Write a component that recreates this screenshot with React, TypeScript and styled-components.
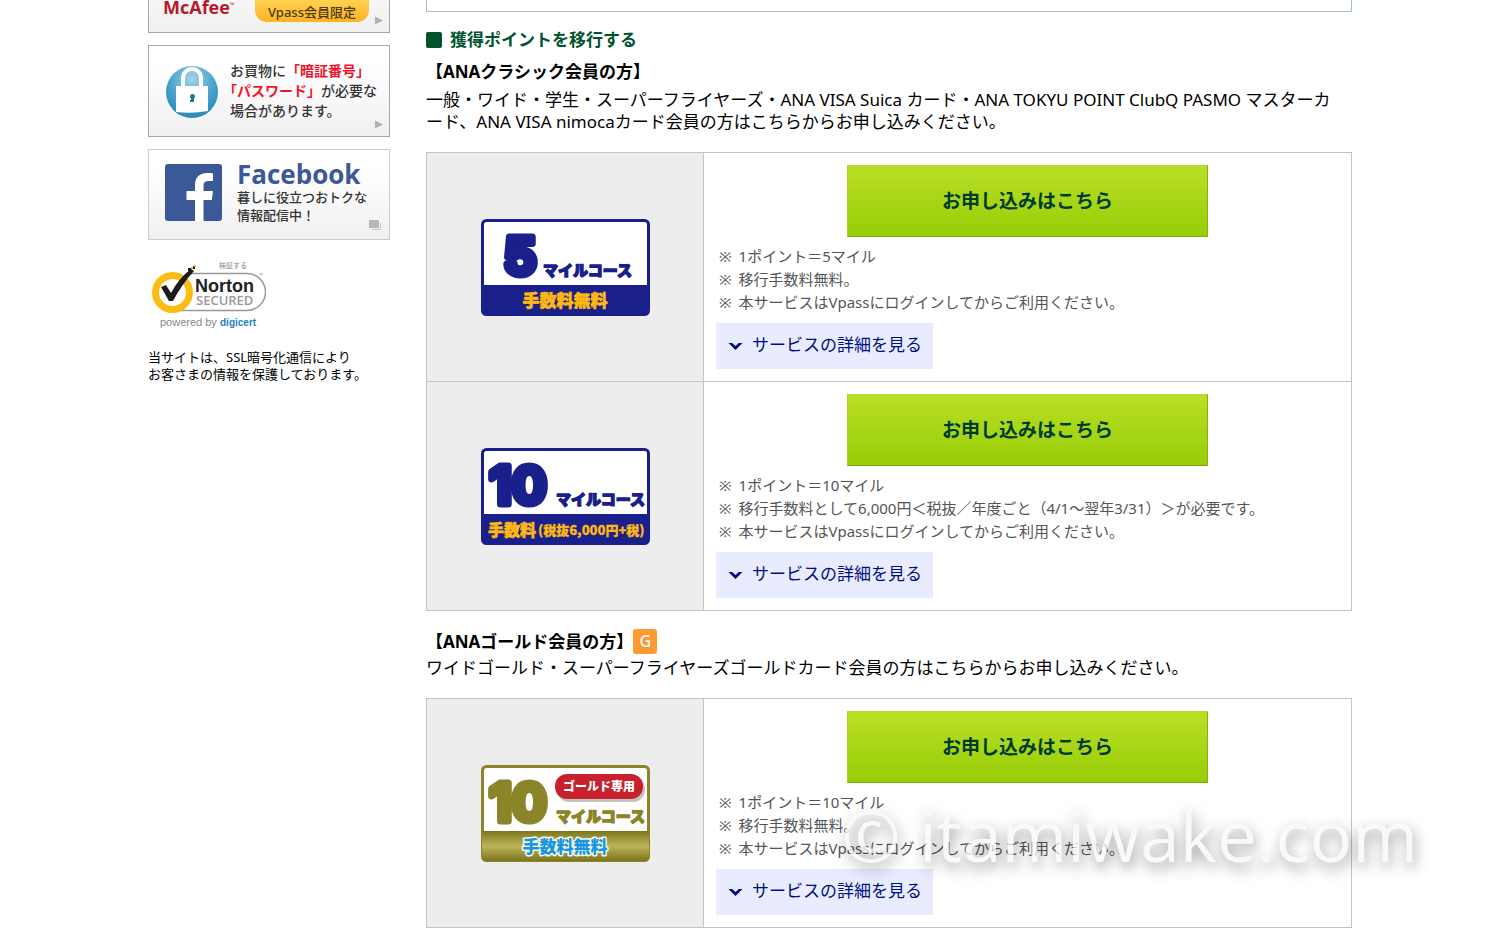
import React from "react";
import styled, { createGlobalStyle, css } from "styled-components";

const GlobalStyle = createGlobalStyle`
  *, *::before, *::after { box-sizing: border-box; }
  body {
    margin: 0;
    background: #fff;
    color: #000;
    font-family: "Noto Sans", "Noto Sans CJK JP", sans-serif;
    font-size: 17px;
    line-height: 22px;
    overflow-x: hidden;
  }
  h2, h3, p, ul { margin: 0; padding: 0; }
  a { color: inherit; text-decoration: none; }
  button { font: inherit; cursor: pointer; }
`;

const Page = styled.div`
  display: flex;
  gap: 36px;
  max-width: 1204px;
  margin: 0 auto;
  align-items: flex-start;
`;

const Sidebar = styled.aside`
  flex: 0 0 241px;
  display: flex;
  flex-direction: column;
  gap: 12px;
`;

const Banner = styled.a<{ $edge?: string; $cut?: boolean }>`
  position: relative;
  display: flex;
  align-items: center;
  height: 92px;
  padding: 0 12px 0 16px;
  border: 1px solid ${(p) => p.$edge ?? "#a8a8a8"};
  background: linear-gradient(#fff 20%, #f0f0f0);
  font-size: 14px;
  line-height: 20px;
  font-weight: 500;
  color: #333;
  ${(p) =>
    p.$cut &&
    css`
      height: 33px;
      border-top: 0;
      align-items: flex-start;
      justify-content: space-between;
      padding: 0 20px 0 14px;
      overflow: hidden;
      background: linear-gradient(#f6f6f6, #f0f0f0);
    `}
`;

const FacebookBanner = styled(Banner)`
  height: 91px;
  padding-bottom: 5px;
`;

const CornerMark = styled.svg`
  position: absolute;
  right: 6px;
  bottom: 7px;
`;

const McAfee = styled.span`
  font: 700 18px/14px "Open Sans", sans-serif;
  color: #b5192d;
  sup { font-size: 6px; line-height: 0; }
`;

const Pill = styled.span`
  padding: 2px 13px 0;
  border-radius: 0 0 12px 12px;
  background: linear-gradient(#ffd24f, #ffb21f);
  font-size: 13px;
  color: #4a3a1a;
`;

const BannerText = styled.span`
  margin-left: 11px;
  white-space: nowrap;
  em { font-style: normal; font-weight: 700; color: #f0142a; }
  span { display: block; text-spacing-trim: trim-start; }
`;

const FacebookText = styled.span`
  margin-left: 15px;
  font-size: 13px;
  line-height: 18px;
  white-space: nowrap;
  strong {
    display: block;
    font: 700 26px/28px "Open Sans", sans-serif;
    color: #3b5998;
  }
  span { display: block; }
`;

const NortonLink = styled.a`
  margin-top: 8px;
  height: 70px;
  svg { display: block; }
`;

const SslNote = styled.p`
  padding-top: 7px;
  font-size: 13px;
  line-height: 17px;
`;

const Main = styled.main`
  position: relative;
  flex: 1;
  min-width: 0;
`;

const PanelEnd = styled.div`
  height: 12px;
  border: 1px solid #a3c6b8;
  border-top: 0;
`;

const SectionHeading = styled.h2`
  display: flex;
  align-items: center;
  gap: 8px;
  margin: 17px 0 10px;
  font-size: 17px;
  color: #00552e;
  &::before {
    content: "";
    width: 16px;
    height: 16px;
    border-radius: 2px;
    background: #00512d;
  }
`;

const MemberTitle = styled.h3<{ $badge?: boolean }>`
  display: flex;
  align-items: center;
  font-size: 17px;
  margin: ${(p) => (p.$badge ? "18px 0 3px" : "0 0 6px")};
`;

const GoldBadge = styled.span`
  width: 24px;
  height: 25px;
  border-radius: 3px;
  background: #ff9a33;
  color: #fff;
  font-size: 16px;
  font-weight: 500;
  line-height: 25px;
  text-align: center;
`;

const Lead = styled.p`
  margin-bottom: 19px;
`;

const CourseTable = styled.table`
  width: 100%;
  border-collapse: collapse;
  table-layout: fixed;
  th, td { border: 1px solid #c4c4c4; padding: 0; }
  th { width: 277px; background: #ededed; }
  th svg { display: block; margin: 0 auto; }
  td { padding: 12px; }
`;

const ApplyButton = styled.button`
  display: block;
  width: 361px;
  height: 72px;
  margin: 0 auto 8px;
  border: 1px solid;
  border-color: #b5dc30 #86b010 #7ca60c #a9d420;
  background: linear-gradient(#b9df25, #98cd08);
  font-size: 19px;
  font-weight: 700;
  color: #003c2c;
`;

const Notes = styled.ul`
  list-style: none;
  font-size: 15px;
  line-height: 23px;
  color: #555;
  margin-bottom: 9px;
  li { display: flex; gap: 7px; padding-left: 3px; }
  li::before { content: "※"; }
`;

const DetailButton = styled.button`
  display: flex;
  align-items: center;
  gap: 9px;
  width: 217px;
  height: 46px;
  padding: 0 0 3px 12px;
  border: 0;
  background: #e9ecfe;
  color: #000f82;
  white-space: nowrap;
  svg { flex: none; margin-top: 4px; }
`;

const Watermark = styled.div`
  position: absolute;
  right: -66px;
  bottom: 46px;
  font: 400 71px/94px "Open Sans", sans-serif;
  white-space: nowrap;
  color: #f8f8f8;
  opacity: 0.75;
  text-shadow: 2px 6px 14px rgba(0, 0, 0, 0.55);
  pointer-events: none;
`;

const jpFont = '"Noto Sans CJK JP", sans-serif';

type CourseKind = "five" | "ten" | "gold";

function CourseBadge({ kind }: { kind: CourseKind }) {
  const gold = kind === "gold";
  const ink = gold ? "#8c8428" : "#19208c";
  const five = kind === "five";
  return (
    <svg width="169" height="97" viewBox="0 0 169 97" role="img" aria-label="マイルコース">
      <defs>
        <linearGradient id="goldBand" x1="0" y1="0" x2="0" y2="1">
          <stop offset="0" stopColor="#7d751c" />
          <stop offset="0.5" stopColor="#bdb45a" />
          <stop offset="1" stopColor="#7d751c" />
        </linearGradient>
      </defs>
      <rect x="1.5" y="1.5" width="166" height="94" rx="4" fill="#fff" stroke={ink} strokeWidth="3" />
      <path d="M1 66H168V91a5 5 0 0 1-5 5H6a5 5 0 0 1-5-5Z" fill={gold ? "url(#goldBand)" : ink} />
      <g fill={ink} stroke={ink} strokeLinejoin="round">
        <text
          x={five ? 39 : 37}
          y="56"
          textAnchor="middle"
          fontFamily="Inter, sans-serif"
          fontWeight="700"
          fontSize="52"
          strokeWidth="7"
        >
          {five ? "5" : "10"}
        </text>
        <text x={five ? 62 : 75} y="57" fontFamily={jpFont} fontWeight="900" fontSize="15" strokeWidth="1.4">
          マイルコース
        </text>
      </g>
      {gold && (
        <g>
          <rect x="76" y="12" width="88" height="25" rx="12" fill="#999" opacity="0.6" />
          <rect x="74" y="9" width="88" height="25" rx="12" fill="#c8202c" />
          <text x="118" y="26" textAnchor="middle" fontFamily={jpFont} fontWeight="900" fontSize="12" fill="#fff">
            ゴールド専用
          </text>
        </g>
      )}
      {kind === "ten" ? (
        <g fill="#fdb813" stroke="#fdb813" fontFamily={jpFont} fontWeight="900">
          <text x="7" y="88" fontSize="16" strokeWidth="0.6">手数料</text>
          <text x="57" y="87" fontSize="13" strokeWidth="0.3">(税抜6,000円+税)</text>
        </g>
      ) : (
        <text
          x="84"
          y="88"
          textAnchor="middle"
          fontFamily={jpFont}
          fontWeight="900"
          fontSize="17"
          fill={gold ? "#1796e0" : "#fdb813"}
          stroke={gold ? "#f4f6e8" : "#fdb813"}
          strokeWidth={gold ? 3 : 0.6}
          paintOrder="stroke"
          strokeLinejoin="round"
        >
          手数料無料
        </text>
      )}
    </svg>
  );
}

function Course({ kind, notes }: { kind: CourseKind; notes: string[] }) {
  return (
    <tr>
      <th scope="row">
        <CourseBadge kind={kind} />
      </th>
      <td>
        <ApplyButton type="button">お申し込みはこちら</ApplyButton>
        <Notes>
          {notes.map((n) => (
            <li key={n}>{n}</li>
          ))}
        </Notes>
        <DetailButton type="button">
          <svg width="15" height="9" viewBox="0 0 15 9" aria-hidden="true">
            <path d="M0.500 1H4.200L7.500 4 10.800 1H14.500L7.500 8Z" fill="#000f82" />
          </svg>
          サービスの詳細を見る
        </DetailButton>
      </td>
    </tr>
  );
}

function ArrowMark() {
  return (
    <CornerMark width="8" height="9" viewBox="0 0 8 9" aria-hidden="true">
      <path d="M0 0.5 8 4.5 0 8.5Z" fill="#b0b0b0" />
    </CornerMark>
  );
}

function LockIcon() {
  return (
    <svg width="54" height="54" viewBox="0 0 54 54" aria-hidden="true">
      <defs>
        <radialGradient id="lockDisc" cx="0.5" cy="0.25" r="0.8">
          <stop offset="0" stopColor="#9fd4ea" />
          <stop offset="0.5" stopColor="#4fa5cc" />
          <stop offset="1" stopColor="#2384b4" />
        </radialGradient>
      </defs>
      <circle cx="27" cy="28" r="26" fill="url(#lockDisc)" />
      <path d="M18 24V14a9 9 0 0 1 18 0V24" fill="none" stroke="#fff" strokeWidth="4" />
      <path d="M11 22H43V47Q27 50 11 48Z" fill="#fff" />
      <path d="M25 32.500a2.500 2.500 0 1 1 4 2V38H25V36h1V34.500a2.500 2.500 0 0 1-1-2Z" fill="#2b6f95" />
    </svg>
  );
}

function FacebookIcon() {
  return (
    <svg width="57" height="57" viewBox="0 0 57 57" aria-hidden="true">
      <rect width="57" height="57" rx="3" fill="#3b5998" />
      <path
        d="M30 57V36H21.500V27H30V21C30 13 35 9 42 9C45 9 47 9.200 48 9.400V17H43.500C40 17 38.500 18.500 38.500 21.500V27H48L46.800 36H38.500V57Z"
        fill="#fff"
      />
    </svg>
  );
}

function NortonSeal() {
  return (
    <svg width="118" height="70" viewBox="0 0 118 70" role="img" aria-label="Norton Secured">
      <text x="71" y="8" fontFamily={jpFont} fontSize="7" fill="#888">検証する</text>
      <path d="M38 13.500H99a18.500 18.500 0 0 1 0 37H32" fill="none" stroke="#999" strokeWidth="1.5" />
      <text x="111" y="17" fontFamily="Open Sans, sans-serif" fontSize="5" fill="#888">™</text>
      <circle cx="24.500" cy="32.500" r="17" fill="#fff" stroke="#fbbd12" strokeWidth="7" />
      <path d="M13 27 18 25 23 33Q31 18 43 9L46 11Q34 24 25 41H21Z" fill="#1c1c1c" />
      <path d="M40 8h3v3h-3ZM45 6h2v3h-2Z" fill="#1c1c1c" />
      <path d="M43 7h2v2h-2ZM46 5h2v2h-2Z" fill="#fbbd12" />
      <text x="47" y="32" fontFamily="Liberation Sans, sans-serif" fontWeight="700" fontSize="18" fill="#222">Norton</text>
      <text x="48" y="45" fontFamily="Open Sans, sans-serif" fontSize="13" fontWeight="600" fill="#999">SECURED</text>
      <text x="12" y="66" fontFamily="Liberation Sans, sans-serif" fontSize="11" fill="#888">powered by</text>
      <text x="72" y="66" fontFamily="Liberation Sans, sans-serif" fontSize="10" fontWeight="700" fill="#1c82c4">digicert</text>
    </svg>
  );
}

const LOGIN_NOTE = "本サービスはVpassにログインしてからご利用ください。";

export default function App() {
  return (
    <>
      <GlobalStyle />
      <Page>
        <Sidebar>
          <Banner href="#mcafee" $cut>
            <McAfee>McAfee<sup>™</sup></McAfee>
            <Pill>Vpass会員限定</Pill>
            <ArrowMark />
          </Banner>
          <Banner href="#password">
            <LockIcon />
            <BannerText>
              <span>お買物に<em>「暗証番号」</em></span>
              <span><em>「パスワード」</em>が必要な</span>
              <span>場合があります。</span>
            </BannerText>
            <ArrowMark />
          </Banner>
          <FacebookBanner href="#facebook" $edge="#cccccc">
            <FacebookIcon />
            <FacebookText>
              <strong>Facebook</strong>
              <span>暮しに役立つおトクな</span>
              <span>情報配信中！</span>
            </FacebookText>
            <CornerMark width="14" height="12" viewBox="0 0 14 12" aria-hidden="true">
              <path d="M0 0H10V8H0Z" fill="#b8b8b8" />
              <path d="M11.500 3V9.500H3" fill="none" stroke="#c4c4c4" />
            </CornerMark>
          </FacebookBanner>
          <NortonLink href="#norton">
            <NortonSeal />
          </NortonLink>
          <SslNote>
            当サイトは、SSL暗号化通信により
            <br />
            お客さまの情報を保護しております。
          </SslNote>
        </Sidebar>
        <Main>
          <PanelEnd />
          <SectionHeading>獲得ポイントを移行する</SectionHeading>
          <MemberTitle>【ANAクラシック会員の方】</MemberTitle>
          <Lead>
            一般・ワイド・学生・スーパーフライヤーズ・ANA VISA Suica カード・ANA TOKYU POINT ClubQ PASMO マスターカ
            <br />
            ード、ANA VISA nimocaカード会員の方はこちらからお申し込みください。
          </Lead>
          <CourseTable>
            <tbody>
              <Course kind="five" notes={["1ポイント＝5マイル", "移行手数料無料。", LOGIN_NOTE]} />
              <Course
                kind="ten"
                notes={[
                  "1ポイント＝10マイル",
                  "移行手数料として6,000円＜税抜／年度ごと（4/1～翌年3/31）＞が必要です。",
                  LOGIN_NOTE,
                ]}
              />
            </tbody>
          </CourseTable>
          <MemberTitle $badge>
            【ANAゴールド会員の方】<GoldBadge>G</GoldBadge>
          </MemberTitle>
          <Lead>ワイドゴールド・スーパーフライヤーズゴールドカード会員の方はこちらからお申し込みください。</Lead>
          <CourseTable>
            <tbody>
              <Course kind="gold" notes={["1ポイント＝10マイル", "移行手数料無料。", LOGIN_NOTE]} />
            </tbody>
          </CourseTable>
          <Watermark>© itamiwake.com</Watermark>
        </Main>
      </Page>
    </>
  );
}
